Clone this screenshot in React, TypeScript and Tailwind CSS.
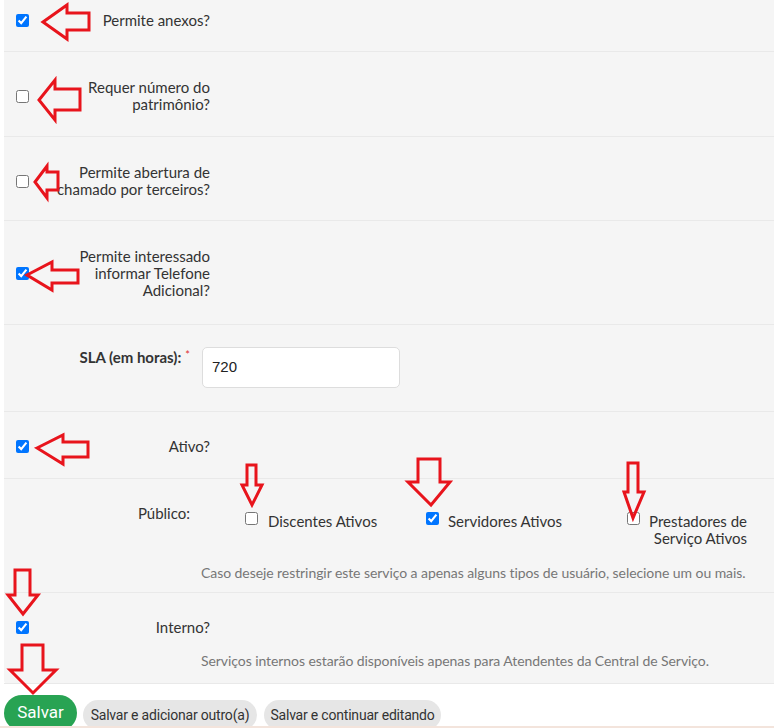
import React from "react";

const LATO = { fontFamily: "Lato, 'Noto Sans', sans-serif" };

function CheckRow({
  checked,
  lines,
  pt,
  pb,
}: {
  checked: boolean;
  lines: string;
  pt: string;
  pb: string;
}) {
  return (
    <div className={`flex items-center pl-3 border-b border-[#e9e9e9] ${pt} ${pb}`}>
      <input type="checkbox" defaultChecked={checked} className="m-0 h-[13px] w-[13px] shrink-0" />
      <label className="ml-[21px] w-[160px] text-right text-[15px] leading-[17px] text-[#333]">{lines}</label>
    </div>
  );
}

function LeftArrow({ tip, xh, yt, yb, ys1, ys2, xe }: { tip: [number, number]; xh: number; yt: number; yb: number; ys1: number; ys2: number; xe: number }) {
  const pts = [
    tip,
    [xh, yt],
    [xh, ys1],
    [xe, ys1],
    [xe, ys2],
    [xh, ys2],
    [xh, yb],
  ]
    .map((p) => p.join(","))
    .join(" ");
  return <polygon points={pts} fill="none" stroke="#e8141c" strokeWidth={3} strokeLinejoin="miter" />;
}

function DownArrow({ xs1, xs2, top, yh, xl, xr, tip }: { xs1: number; xs2: number; top: number; yh: number; xl: number; xr: number; tip: [number, number] }) {
  const pts = [
    [xs1, top],
    [xs2, top],
    [xs2, yh],
    [xr, yh],
    tip,
    [xl, yh],
    [xs1, yh],
  ]
    .map((p) => p.join(","))
    .join(" ");
  return <polygon points={pts} fill="none" stroke="#e8141c" strokeWidth={3} strokeLinejoin="miter" />;
}

export default function App() {
  return (
    <div className="relative min-h-screen w-full overflow-hidden bg-white" style={LATO}>
      <div className="ml-[4px] rounded-bl-[4px] bg-[#f5f5f5]">
        <CheckRow checked lines="Permite anexos?" pt="pt-[12px]" pb="pb-[22px]" />
        <CheckRow checked={false} lines="Requer número do patrimônio?" pt="pt-[27px]" pb="pb-[23px]" />
        <CheckRow checked={false} lines="Permite abertura de chamado por terceiros?" pt="pt-[27px]" pb="pb-[22px]" />
        <CheckRow checked lines="Permite interessado informar Telefone Adicional?" pt="pt-[27px]" pb="pb-[25px]" />

        {/* SLA */}
        <div className="flex items-start border-b border-[#e9e9e9] pt-[22px] pb-[23px]">
          <div className="mt-[2px] w-[186px] text-right text-[15px] font-bold leading-[17px] text-[#333]">
            SLA (em horas):<span className="ml-[4px] align-top text-[11px] font-normal leading-[11px] text-[#e03030]">*</span>
          </div>
          <div className="ml-[12px] flex h-[41px] w-[198px] items-center rounded-[5px] border border-[#dddddd] bg-white pl-[9px] text-[15px] text-[#222]" style={{ fontFamily: "'Liberation Sans', Arial, sans-serif" }}>
            720
          </div>
        </div>

        {/* Ativo */}
        <CheckRow checked lines="Ativo?" pt="pt-[26px]" pb="pb-[23px]" />

        {/* Público */}
        <div className="flex flex-col border-b border-[#e9e9e9] pt-[26px] pb-[11px]">
          <div className="flex items-start">
            <div className="w-[186px] text-right text-[15px] leading-[17px] text-[#333]">Público:</div>
            <div className="ml-[55px] mt-[8px] flex items-start text-[15px] leading-[17px] text-[#333]">
              <div className="flex w-[181px] items-start">
                <input type="checkbox" className="m-0 mt-[-1px] h-[13px] w-[13px] shrink-0" />
                <span className="ml-[10px]">Discentes Ativos</span>
              </div>
              <div className="flex w-[201px] items-start">
                <input type="checkbox" defaultChecked className="m-0 mt-[-1px] h-[13px] w-[13px] shrink-0" />
                <span className="ml-[9px]">Servidores Ativos</span>
              </div>
              <div className="flex items-start">
                <input type="checkbox" className="m-0 mt-[-1px] h-[13px] w-[13px] shrink-0" />
                <span className="ml-[3px] w-[104px] text-right">Prestadores de Serviço Ativos</span>
              </div>
            </div>
          </div>
          <p className="ml-[197px] mt-[18px] text-[14px] leading-[16px] tracking-[-0.07px] text-[#777]">
            Caso deseje restringir este serviço a apenas alguns tipos de usuário, selecione um ou mais.
          </p>
        </div>

        {/* Interno */}
        <div className="flex flex-col border-b border-[#e9e9e9] pt-[26px] pb-[14px]">
          <div className="flex items-center pl-3">
            <input type="checkbox" defaultChecked className="m-0 h-[13px] w-[13px] shrink-0" />
            <label className="ml-[21px] w-[160px] text-right text-[15px] leading-[17px] text-[#333]">Interno?</label>
          </div>
          <p className="ml-[197px] mt-[17px] text-[14px] leading-[16px] tracking-[-0.07px] text-[#777]">
            Serviços internos estarão disponíveis apenas para Atendentes da Central de Serviço.
          </p>
        </div>
      </div>

      {/* Buttons */}
      <div className="flex items-start gap-[6px] pl-[4px] pt-[11px]" style={{ fontFamily: "Roboto, 'Liberation Sans', sans-serif" }}>
        <button className="h-[36px] w-[73px] rounded-full bg-[#28a353] text-[17px] text-white">Salvar</button>
        <button className="mt-[5px] h-[30px] w-[174px] rounded-full bg-[#e6e6e6] text-[14px] tracking-[-0.2px] text-[#333]">Salvar e adicionar outro(a)</button>
        <button className="ml-[1px] mt-[5px] h-[30px] w-[177px] rounded-full bg-[#e6e6e6] text-[14px] tracking-[-0.2px] text-[#333]">Salvar e continuar editando</button>
      </div>

      <div className="fixed bottom-0 left-0 h-[2px] w-full bg-[#f3e4dc]" />

      {/* annotation arrows */}
      <svg className="pointer-events-none absolute left-0 top-0" width={774} height={728}>
        <LeftArrow tip={[43, 22]} xh={67} yt={5} yb={39} ys1={13} ys2={30} xe={89} />
        <LeftArrow tip={[39, 100]} xh={55} yt={80} yb={120} ys1={89} ys2={110} xe={80} />
        <LeftArrow tip={[35, 182]} xh={47} yt={166} yb={198} ys1={172} ys2={190} xe={58} />
        <LeftArrow tip={[27, 275]} xh={52} yt={262} yb={290} ys1={270} ys2={283} xe={78} />
        <LeftArrow tip={[37, 448]} xh={63} yt={435} yb={464} ys1={442} ys2={457} xe={88} />
        <DownArrow xs1={247} xs2={256} top={465} yh={485} xl={242} xr={262} tip={[252, 505]} />
        <DownArrow xs1={418} xs2={440} top={459} yh={482} xl={408} xr={450} tip={[431, 505]} />
        <DownArrow xs1={628} xs2={638} top={463} yh={492} xl={624} xr={644} tip={[633, 518]} />
        <DownArrow xs1={15} xs2={30} top={570} yh={595} xl={8} xr={38} tip={[23, 614]} />
        <DownArrow xs1={22} xs2={43} top={645} yh={670} xl={10} xr={56} tip={[33, 693]} />
      </svg>
    </div>
  );
}
